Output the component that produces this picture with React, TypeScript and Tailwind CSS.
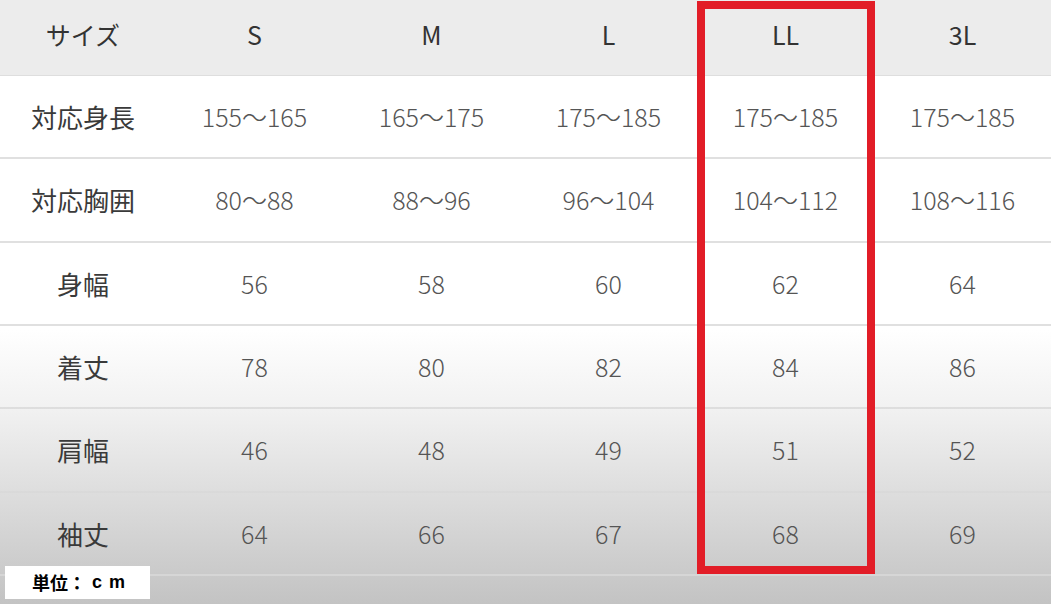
import React from 'react';

const sizes = ['S', 'M', 'L', 'LL', '3L'];

const rows: { label: string; values: string[] }[] = [
  { label: '対応身長', values: ['155〜165', '165〜175', '175〜185', '175〜185', '175〜185'] },
  { label: '対応胸囲', values: ['80〜88', '88〜96', '96〜104', '104〜112', '108〜116'] },
  { label: '身幅', values: ['56', '58', '60', '62', '64'] },
  { label: '着丈', values: ['78', '80', '82', '84', '86'] },
  { label: '肩幅', values: ['46', '48', '49', '51', '52'] },
  { label: '袖丈', values: ['64', '66', '67', '68', '69'] },
];

const font = "font-['Noto_Sans_CJK_JP','Noto_Sans',sans-serif]";

export default function App() {
  return (
    <div
      className={`relative w-[1051px] h-[604px] overflow-hidden bg-[linear-gradient(180deg,#ffffff_0px,#ffffff_330px,#f1f1f1_410px,#dedede_490px,#c3c3c3_604px)] ${font}`}
    >
      {/* Header */}
      <div className="grid grid-cols-[166px_repeat(5,177px)] h-[76px] bg-[#ececec] border-b border-[#dedede]">
        <div className="flex items-center justify-center pb-[5px] text-[25px] text-[#333]">サイズ</div>
        {sizes.map((s) => (
          <div key={s} className="flex items-center justify-center pb-[5px] text-[25px] text-[#333]">
            {s}
          </div>
        ))}
      </div>

      {/* Body */}
      {rows.map((row) => (
        <div
          key={row.label}
          className="grid grid-cols-[166px_repeat(5,177px)] h-[83.33px] border-b-2 border-[#d8d8d8]/80"
        >
          <div className="flex items-center justify-center text-[26px] text-[#3a3a3a]">{row.label}</div>
          {row.values.map((v, i) => (
            <div key={i} className="flex items-center justify-center text-[25px] font-light text-[#555]">
              {v}
            </div>
          ))}
        </div>
      ))}

      {/* Highlight on LL */}
      <div className="absolute left-[697px] top-[1px] w-[178px] h-[573px] border-[8.5px] border-[#e21d27]" />

      {/* Unit label */}
      <div className="absolute left-[5px] top-[566px] w-[145px] h-[33px] bg-white flex items-center pl-[27px]">
        <span className="text-[18px] font-bold text-black">単位：</span>
        <span className="text-[18px] font-bold text-black tracking-[7px] ml-[6px] font-['Liberation_Sans',sans-serif]">cm</span>
      </div>
    </div>
  );
}
